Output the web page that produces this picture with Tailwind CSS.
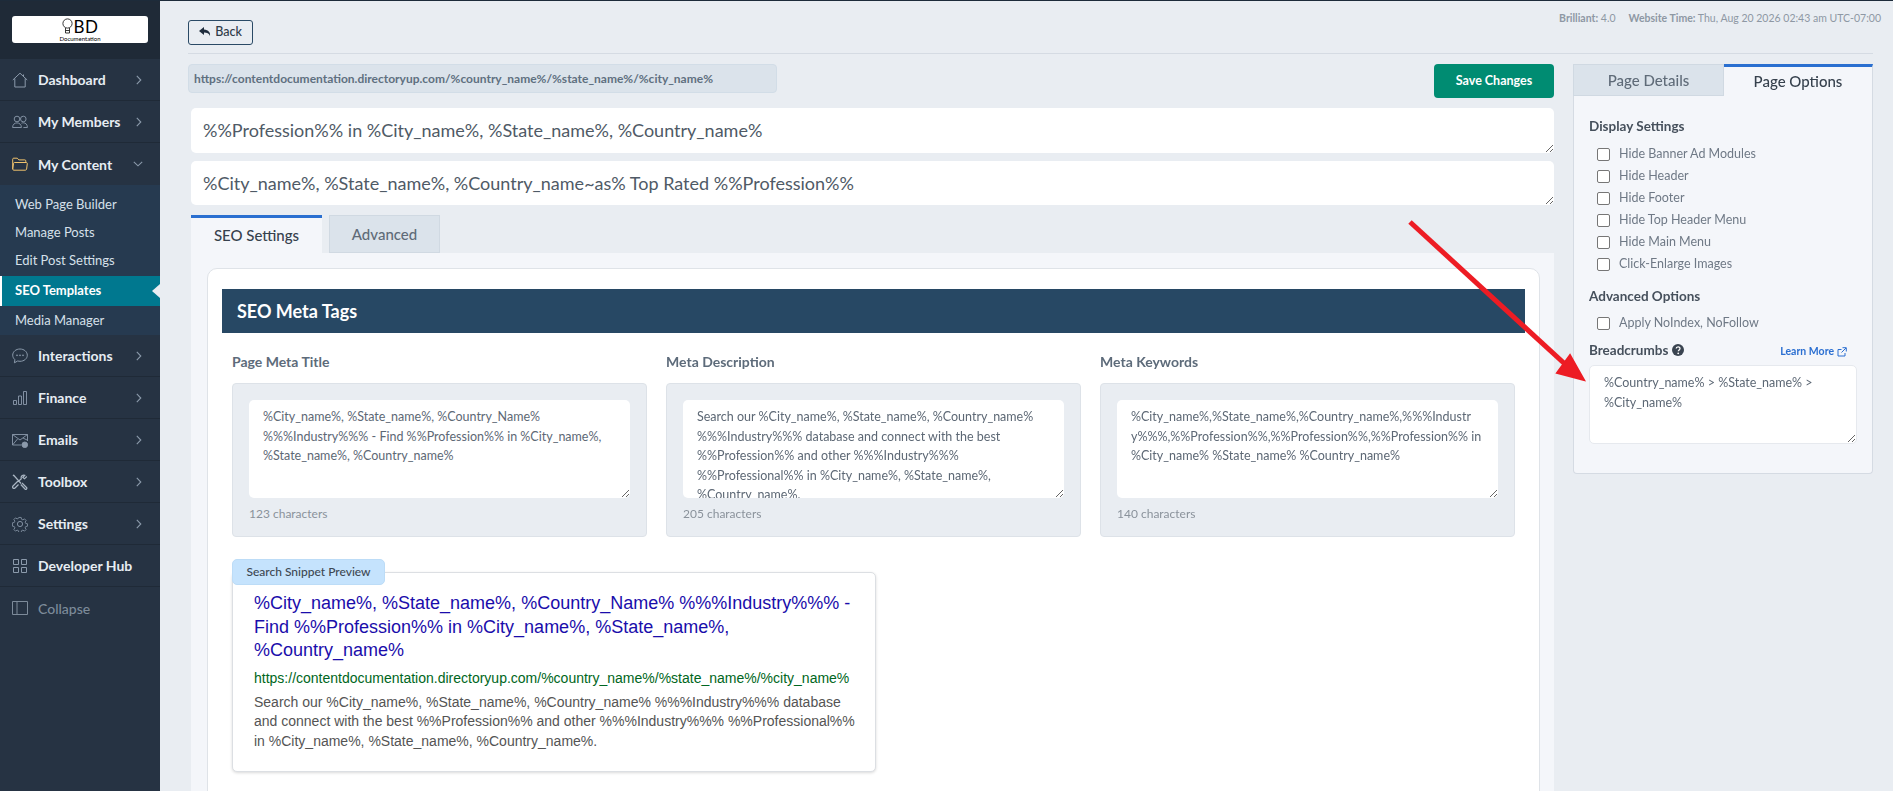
<!DOCTYPE html>
<html class="bg-[#e9edf2]">
<head>
  <meta charset="utf-8">
  <title>SEO Templates</title>
  <script src="https://cdn.jsdelivr.net/npm/@tailwindcss/browser@4"></script>
</head>
<body class="h-[791px] overflow-hidden font-['Lato',sans-serif] text-[#4a5568]">
<div class="relative flex h-[791px] border-t border-[#1d2b3a]">

  <!-- sidebar -->
  <aside class="w-[160px] shrink-0 bg-[#263343] text-[#e6edf3]">
    <div class="h-[58px] bg-[#1f2a37] pt-[15px] px-[12px]">
      <div class="flex h-[27px] flex-col items-center justify-center rounded-[3px] bg-white text-black">
        <div class="flex h-[18px] items-center gap-[1px]">
          <svg class="h-[17px] w-[11px]" viewBox="0 0 11 17" fill="none" stroke="#222" stroke-width="0.9"><circle cx="5.5" cy="5.5" r="4.6"/><path d="M3.5 10v5h4v-5M3.5 12.5h4"/></svg>
          <span class="text-[17px] leading-none tracking-[0.5px]">BD</span>
        </div>
        <span class="-mt-[1px] text-[6px] leading-[7px]">Documentation</span>
      </div>
    </div>

    <a class="flex h-[42px] items-center border-b border-[#1f2a37] pl-[12px] pr-[18px] text-[14px] font-bold">
      <svg class="mr-[10px] h-[16px] w-[16px]" viewBox="0 0 16 16" fill="none" stroke="#8b9aab"><path d="M.8 8 8 1.2 15.2 8M2.8 6.5v8.5h10.4V6.5M11.5 2.5v2"/></svg>
      <span class="flex-1">Dashboard</span>
      <svg class="h-[10px] w-[6px]" viewBox="0 0 6 10" fill="none" stroke="#8b9aab" stroke-width="1.1"><path d="m.8.8 4 4.2-4 4.2"/></svg>
    </a>
    <a class="flex h-[42px] items-center border-b border-[#1f2a37] pl-[12px] pr-[18px] text-[14px] font-bold">
      <svg class="mr-[10px] h-[16px] w-[16px]" viewBox="0 0 16 16" fill="none" stroke="#8b9aab" stroke-width="0.9"><circle cx="5" cy="5" r="2.8"/><circle cx="11.3" cy="5" r="2.8"/><path d="M.6 13.5c0-3 2-4.6 4.4-4.6s4.4 1.6 4.4 4.6zM9.5 9.2c.6-.3 1.2-.4 1.8-.4 2.4 0 4.1 1.6 4.1 4.7h-4"/></svg>
      <span class="flex-1">My Members</span>
      <svg class="h-[10px] w-[6px]" viewBox="0 0 6 10" fill="none" stroke="#8b9aab" stroke-width="1.1"><path d="m.8.8 4 4.2-4 4.2"/></svg>
    </a>
    <a class="flex h-[42px] items-center pl-[12px] pr-[17px] text-[14px] font-bold">
      <svg class="mr-[10px] h-[16px] w-[16px]" viewBox="0 0 16 16" fill="none" stroke="#f0c36d"><path d="M.7 13V3.2c0-.7.4-1 1-1h3.6l1.5 1.7h6c.6 0 1 .3 1 1v1M.7 13c0 .8.5 1.2 1.1 1.2h11.6c.6 0 1-.4 1.2-1l.7-5.7c0-.6-.4-1-1-1H2.600c-.6 0-1 .4-1.100 1z"/></svg>
      <span class="flex-1">My Content</span>
      <svg class="h-[6px] w-[10px]" viewBox="0 0 10 6" fill="none" stroke="#8b9aab" stroke-width="1.1"><path d="m.8.8 4.200 4 4.200-4"/></svg>
    </a>

    <div class="flex h-[150px] flex-col bg-[#263a50] text-[13px] text-[#d6e0ea]">
      <a class="flex h-[35px] items-end pb-[6px] pl-[15px]">Web Page Builder</a>
      <a class="flex h-[26px] items-center pl-[15px]">Manage Posts</a>
      <a class="flex h-[30px] items-center pl-[15px]">Edit Post Settings</a>
      <a class="relative flex h-[30px] items-center border-l-2 border-white bg-[#00788f] pl-[13px] font-bold text-white">SEO Templates
        <span class="absolute right-0 top-[8px] h-0 w-0 border-y-[7px] border-r-[8px] border-y-transparent border-r-[#e9edf2]"></span>
      </a>
      <a class="flex h-[29px] items-center pl-[15px]">Media Manager</a>
    </div>

    <a class="flex h-[42px] items-center border-b border-[#1f2a37] pl-[12px] pr-[18px] text-[14px] font-bold">
      <svg class="mr-[10px] h-[16px] w-[16px]" viewBox="0 0 16 16" fill="none" stroke="#8b9aab"><path d="M8 1C3.900 1 .7 3.700.7 7.200c0 1.800.9 3.300 2.200 4.500l-.5 3.100 3.200-1.800c.8.200 1.600.3 2.400.3 4.100 0 7.300-2.700 7.300-6.100S12.100 1 8 1z"/><circle cx="5" cy="7.300" r=".5"/><circle cx="8" cy="7.300" r=".5"/><circle cx="11" cy="7.300" r=".5"/></svg>
      <span class="flex-1">Interactions</span>
      <svg class="h-[10px] w-[6px]" viewBox="0 0 6 10" fill="none" stroke="#8b9aab" stroke-width="1.1"><path d="m.8.8 4 4.200-4 4.200"/></svg>
    </a>
    <a class="flex h-[42px] items-center border-b border-[#1f2a37] pl-[12px] pr-[18px] text-[14px] font-bold">
      <svg class="mr-[10px] h-[16px] w-[16px]" viewBox="0 0 16 16" fill="none" stroke="#8b9aab" stroke-width="0.9"><path d="M1.500 10.500h3v4h-3zM6.500 6h3v8.500h-3zM11.500 1.500h3v13h-3z"/></svg>
      <span class="flex-1">Finance</span>
      <svg class="h-[10px] w-[6px]" viewBox="0 0 6 10" fill="none" stroke="#8b9aab" stroke-width="1.1"><path d="m.8.8 4 4.200-4 4.200"/></svg>
    </a>
    <a class="flex h-[42px] items-center border-b border-[#1f2a37] pl-[12px] pr-[18px] text-[14px] font-bold">
      <svg class="mr-[10px] h-[16px] w-[16px]" viewBox="0 0 16 16" fill="none" stroke="#8b9aab" stroke-width="0.9"><path d="M9.500 13H.5V2.500h15V9M.5 2.500 8 8l7.500-5.500M.5 13l5-6M15 8 11 6"/><circle cx="12.800" cy="12.800" r="2.800" fill="#8b9aab"/></svg>
      <span class="flex-1">Emails</span>
      <svg class="h-[10px] w-[6px]" viewBox="0 0 6 10" fill="none" stroke="#8b9aab" stroke-width="1.1"><path d="m.8.8 4 4.200-4 4.200"/></svg>
    </a>
    <a class="flex h-[42px] items-center border-b border-[#1f2a37] pl-[12px] pr-[18px] text-[14px] font-bold">
      <svg class="mr-[10px] h-[16px] w-[16px]" viewBox="0 0 16 16" fill="none" stroke="#a9b5c2" stroke-width="1.200"><path d="M1.500 1 9 9.500M1 1.800 1.800 1M6.500 10.500 3 14a1.400 1.400 0 0 1-2-2l5.500-5.500M14.800 2.500l-2.300 2.300-1.700-1.300 2-2.300c-2-.7-4.300 1-3.500 3.500L6.800 7M10 9l4.500 4.500a1 1 0 0 1-1.500 1.500L8.800 10.500"/></svg>
      <span class="flex-1">Toolbox</span>
      <svg class="h-[10px] w-[6px]" viewBox="0 0 6 10" fill="none" stroke="#8b9aab" stroke-width="1.1"><path d="m.8.8 4 4.200-4 4.200"/></svg>
    </a>
    <a class="flex h-[42px] items-center border-b border-[#1f2a37] pl-[12px] pr-[18px] text-[14px] font-bold">
      <svg class="mr-[10px] h-[16px] w-[16px]" viewBox="0 0 16 16" fill="none" stroke="#8b9aab" stroke-width="0.9"><circle cx="8" cy="8" r="2.600"/><path d="M6.700.7h2.600l.4 2 1.500.7 1.800-1.100 1.800 1.800-1.100 1.800.7 1.500 2 .4v2.600l-2 .4-.7 1.500 1.100 1.800-1.800 1.800-1.800-1.100-1.500.7-.4 2H6.700l-.4-2-1.500-.7-1.800 1.100-1.800-1.800 1.100-1.800-.7-1.500-2-.4V6.700l2-.4.700-1.500-1.100-1.800 1.800-1.800 1.800 1.100 1.500-.7z" transform="translate(.8 .8) scale(.9)"/></svg>
      <span class="flex-1">Settings</span>
      <svg class="h-[10px] w-[6px]" viewBox="0 0 6 10" fill="none" stroke="#8b9aab" stroke-width="1.1"><path d="m.8.8 4 4.200-4 4.200"/></svg>
    </a>
    <a class="flex h-[42px] items-center border-b border-[#1f2a37] pl-[12px] text-[14px] font-bold">
      <svg class="mr-[10px] h-[16px] w-[16px]" viewBox="0 0 16 16" fill="none" stroke="#8b9aab"><path d="M1.500 1.500h5v5h-5zM9.500 1.500h5v5h-5zM1.500 9.500h5v5h-5zM9.500 9.500h5v5h-5z"/></svg>
      <span>Developer Hub</span>
    </a>
    <a class="flex h-[42px] items-center pl-[12px] text-[14px] font-medium text-[#7d8b9a]">
      <svg class="mr-[10px] h-[16px] w-[16px]" viewBox="0 0 16 16" fill="none" stroke="#7d8b9a"><path d="M.5 1.500h15v13H.5zM5 1.500v13"/></svg>
      <span>Collapse</span>
    </a>
  </aside>

  <!-- main -->
  <main class="min-w-0 flex-1 pl-[28px] pr-[20px]">
    <div class="flex h-[53px] items-start justify-between border-b border-[#d5dbe3] pt-[19px]">
      <button class="flex h-[25px] w-[65px] items-center justify-center gap-[4px] rounded-[3px] border border-[#2a4a66] text-[12.500px] font-medium text-[#2f3b48]">
        <svg class="h-[11px] w-[12px]" viewBox="0 0 12 11" fill="#1f2d3d"><path d="M5 0 0 4l5 4V5.500c3 0 5 .8 6 3.500 .6-3.500-1.500-6-6-6.500z"/></svg>
        Back
      </button>
      <div class="-mr-[8px] -mt-[9px] flex gap-[13px] text-[10.500px] text-[#8e98a4]">
        <span><b class="font-bold">Brilliant:</b> 4.0</span>
        <span><b class="font-bold">Website Time:</b> Thu, Aug 20 2026 02:43 am UTC-07:00</span>
      </div>
    </div>

    <div class="mt-[10px] flex gap-[19px]">
      <!-- left column -->
      <div class="w-[1366px] shrink-0">
        <div class="flex h-[44px] items-start justify-between">
          <div class="flex h-[29px] w-[589px] items-center rounded-[4px] border border-[#d2dde7] bg-[#dbe3eb] pl-[5px] text-[12px] font-bold text-[#5f7080]">https://contentdocumentation.directoryup.com/%country_name%/%state_name%/%city_name%</div>
          <button class="h-[34px] w-[120px] rounded-[4px] bg-[#008c72] text-[12.500px] font-bold text-white">Save Changes</button>
        </div>

        <textarea readonly class="ml-[3px] block h-[45px] w-[1363px] rounded-[5px] bg-white px-[12px] py-[8px] text-[18px] leading-[28px] text-[#4f5a66] outline-none">%%Profession%% in %City_name%, %State_name%, %Country_name%</textarea>
        <textarea readonly class="ml-[3px] mt-[8px] block h-[44px] w-[1363px] rounded-[5px] bg-white px-[12px] py-[8px] text-[18px] leading-[28px] text-[#4f5a66] outline-none">%City_name%, %State_name%, %Country_name~as% Top Rated %%Profession%%</textarea>

        <div class="ml-[3px] mt-[10px] flex gap-[7px] text-[15px] font-medium">
          <div class="flex h-[38px] w-[131px] items-center justify-center border-t-[3px] border-[#2a6fd0] bg-[#f4f6fa] text-[#36414d]">SEO Settings</div>
          <div class="flex h-[38px] w-[111px] items-center justify-center border border-[#d0d9e2] bg-[#dbe3eb] text-[#5f6b78]">Advanced</div>
        </div>

        <div class="ml-[3px] h-[600px] bg-[#f4f6fa] pl-[16px] pr-[14px] pt-[15px]">
          <div class="h-[600px] rounded-[10px] border border-[#dfe3e8] bg-white px-[14px] pt-[20px]">
            <div class="flex h-[44px] items-center bg-[#274864] pl-[15px] text-[18px] font-bold text-white">SEO Meta Tags</div>

            <div class="mt-[18px] grid grid-cols-3 gap-[19px] px-[10px]">
              <div>
                <div class="mb-[10px] h-[22px] text-[14px] font-bold leading-[22px] text-[#5d6b7a]">Page Meta Title</div>
                <div class="h-[154px] rounded-[4px] border border-[#dde2e8] bg-[#e9edf2] px-[16px] pt-[16px]">
                  <textarea readonly class="block h-[98px] w-full rounded-[5px] bg-white px-[14px] py-[7px] text-[12.500px] leading-[19.500px] text-[#5d6875] outline-none">%City_name%, %State_name%, %Country_Name% %%%Industry%%% - Find %%Profession%% in %City_name%, %State_name%, %Country_name%</textarea>
                  <div class="mt-[7px] text-[12px] text-[#8a929b]">123 characters</div>
                </div>
              </div>
              <div>
                <div class="mb-[10px] h-[22px] text-[14px] font-bold leading-[22px] text-[#5d6b7a]">Meta Description</div>
                <div class="h-[154px] rounded-[4px] border border-[#dde2e8] bg-[#e9edf2] px-[16px] pt-[16px]">
                  <textarea readonly class="block h-[98px] w-full overflow-y-scroll rounded-[5px] bg-white px-[14px] py-[7px] text-[12.500px] leading-[19.500px] text-[#5d6875] outline-none">Search our %City_name%, %State_name%, %Country_name% %%%Industry%%% database and connect with the best %%Profession%% and other %%%Industry%%% %%Professional%% in %City_name%, %State_name%, %Country_name%.</textarea>
                  <div class="mt-[7px] text-[12px] text-[#8a929b]">205 characters</div>
                </div>
              </div>
              <div>
                <div class="mb-[10px] h-[22px] text-[14px] font-bold leading-[22px] text-[#5d6b7a]">Meta Keywords</div>
                <div class="h-[154px] rounded-[4px] border border-[#dde2e8] bg-[#e9edf2] px-[16px] pt-[16px]">
                  <textarea readonly class="block h-[98px] w-full rounded-[5px] bg-white px-[14px] py-[7px] text-[12.500px] leading-[19.500px] text-[#5d6875] outline-none [word-break:break-all]">%City_name%,%State_name%,%Country_name%,%%%Industry%%%,%%Profession%%,%%Profession%%,%%Profession%% in %City_name% %State_name% %Country_name%</textarea>
                  <div class="mt-[7px] text-[12px] text-[#8a929b]">140 characters</div>
                </div>
              </div>
            </div>

            <div class="relative ml-[10px] mt-[35px] h-[200px] w-[644px] rounded-[5px] border border-[#dcdfe3] bg-white pl-[21px] pr-[20px] pt-[19px] shadow-[0_1px_3px_rgba(0,0,0,0.15)] font-['Liberation_Sans',sans-serif]">
              <span class="absolute -left-px -top-[14px] flex h-[26px] w-[153px] items-center justify-center rounded-[5px] border border-[#bcdcf7] bg-[#c5e3fd] font-['Lato',sans-serif] text-[12px] font-medium text-[#3d4852]">Search Snippet Preview</span>
              <div class="text-[18px] leading-[23.500px] text-[#1a0dab]">%City_name%, %State_name%, %Country_Name% %%%Industry%%% - Find %%Profession%% in %City_name%, %State_name%, %Country_name%</div>
              <div class="mt-[4px] whitespace-nowrap text-[14px] leading-[23px] text-[#006621]">https://contentdocumentation.directoryup.com/%country_name%/%state_name%/%city_name%</div>
              <div class="mt-[3px] text-[14px] leading-[19.500px] text-[#545454]">Search our %City_name%, %State_name%, %Country_name% %%%Industry%%% database and connect with the best %%Profession%% and other %%%Industry%%% %%Professional%% in %City_name%, %State_name%, %Country_name%.</div>
            </div>
          </div>
        </div>
      </div>

      <!-- right column -->
      <div class="w-[300px] shrink-0">
        <div class="flex h-[32px] text-[15px] font-medium">
          <div class="flex w-[151px] items-center justify-center border border-[#d0d9e2] bg-[#dbe3eb] text-[#5f6b78]">Page Details</div>
          <div class="flex flex-1 items-center justify-center border-t-[3px] border-r border-t-[#2a6fd0] border-r-[#d5dbe3] bg-[#f4f6fa] text-[#36414d]">Page Options</div>
        </div>
        <div class="h-[378px] rounded-b-[4px] border-x border-b border-[#d5dbe3] bg-[#f4f6fa] px-[15px] pt-[20px]">
          <div class="h-[20px] text-[13.500px] font-bold leading-[20px] text-[#46505c]">Display Settings</div>
          <div class="mt-[7px] flex flex-col pl-[8px] text-[12.500px] text-[#6f7986]">
            <label class="flex h-[22px] items-center gap-[9px]"><span class="h-[13px] w-[13px] rounded-[2px] border border-[#767676] bg-white"></span>Hide Banner Ad Modules</label>
            <label class="flex h-[22px] items-center gap-[9px]"><span class="h-[13px] w-[13px] rounded-[2px] border border-[#767676] bg-white"></span>Hide Header</label>
            <label class="flex h-[22px] items-center gap-[9px]"><span class="h-[13px] w-[13px] rounded-[2px] border border-[#767676] bg-white"></span>Hide Footer</label>
            <label class="flex h-[22px] items-center gap-[9px]"><span class="h-[13px] w-[13px] rounded-[2px] border border-[#767676] bg-white"></span>Hide Top Header Menu</label>
            <label class="flex h-[22px] items-center gap-[9px]"><span class="h-[13px] w-[13px] rounded-[2px] border border-[#767676] bg-white"></span>Hide Main Menu</label>
            <label class="flex h-[22px] items-center gap-[9px]"><span class="h-[13px] w-[13px] rounded-[2px] border border-[#767676] bg-white"></span>Click-Enlarge Images</label>
          </div>
          <div class="mt-[11px] h-[20px] text-[13.500px] font-bold leading-[20px] text-[#46505c]">Advanced Options</div>
          <label class="mt-[6px] flex h-[22px] items-center gap-[9px] pl-[8px] text-[12.500px] text-[#6f7986]"><span class="h-[13px] w-[13px] rounded-[2px] border border-[#767676] bg-white"></span>Apply NoIndex, NoFollow</label>
          <div class="mt-[6px] flex h-[20px] items-center justify-between pr-[10px]">
            <span class="flex items-center gap-[4px] text-[13.500px] font-bold text-[#46505c]">Breadcrumbs
              <svg class="h-[12px] w-[12px]" viewBox="0 0 12 12"><circle cx="6" cy="6" r="6" fill="#3a4450"/><path d="M4.200 4.600c0-2.200 3.800-2.400 3.800-.1 0 1.400-1.700 1.400-1.700 2.700" fill="none" stroke="#fff" stroke-width="1.300"/><circle cx="6.200" cy="9.300" r=".9" fill="#fff"/></svg>
            </span>
            <a class="mt-[3px] flex items-center gap-[3px] text-[10.500px] font-bold text-[#2b6fd1]">Learn More
              <svg class="h-[10px] w-[10px]" viewBox="0 0 10 10" fill="none" stroke="#2b6fd1"><path d="M8 6v3H1V2.500h3.500M5.500.7h3.800v3.800M9 1 4.500 5.500"/></svg>
            </a>
          </div>
          <textarea readonly class="mt-[5px] block h-[79px] w-full rounded-[5px] border border-[#e6e9ee] bg-white px-[14px] py-[7px] text-[12.500px] leading-[20px] text-[#5d6875] outline-none">%Country_name% &gt; %State_name% &gt; %City_name%</textarea>
        </div>
      </div>
    </div>
  </main>

  <!-- annotation arrow drawn over the page -->
  <svg class="pointer-events-none absolute left-0 top-[-1px] h-[791px] w-[1893px]" viewBox="0 0 1893 791">
    <path d="M1410 222 1566 365" stroke="#ed1c24" stroke-width="5" fill="none"/>
    <path d="M1584 380 1557 373 1570 355z" fill="#ed1c24" stroke="#ed1c24" stroke-width="2"/>
  </svg>
</div>
</body>
</html>
